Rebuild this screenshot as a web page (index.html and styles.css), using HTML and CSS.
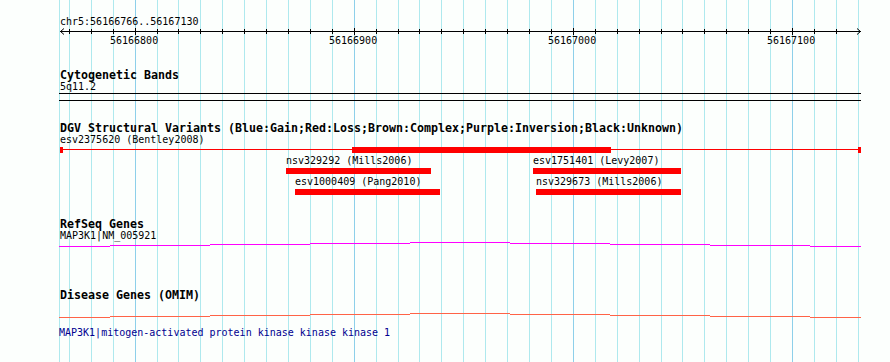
FILE: index.html
```html
<!DOCTYPE html>
<html lang="en">
<head>
<meta charset="utf-8">
<title>chr5:56166766..56167130</title>
<link rel="stylesheet" href="styles.css">
</head>
<body>
<div class="browser">
  <svg class="grid" width="890" height="362" viewBox="0 0 890 362" shape-rendering="crispEdges" aria-hidden="true">
    <g class="minor">
      <rect x="59" y="0" width="1" height="362"/>
      <rect x="69" y="0" width="1" height="362"/>
      <rect x="91" y="0" width="1" height="362"/>
      <rect x="113" y="0" width="1" height="362"/>
      <rect x="157" y="0" width="1" height="362"/>
      <rect x="178" y="0" width="1" height="362"/>
      <rect x="200" y="0" width="1" height="362"/>
      <rect x="222" y="0" width="1" height="362"/>
      <rect x="244" y="0" width="1" height="362"/>
      <rect x="266" y="0" width="1" height="362"/>
      <rect x="288" y="0" width="1" height="362"/>
      <rect x="310" y="0" width="1" height="362"/>
      <rect x="332" y="0" width="1" height="362"/>
      <rect x="376" y="0" width="1" height="362"/>
      <rect x="398" y="0" width="1" height="362"/>
      <rect x="419" y="0" width="1" height="362"/>
      <rect x="441" y="0" width="1" height="362"/>
      <rect x="463" y="0" width="1" height="362"/>
      <rect x="485" y="0" width="1" height="362"/>
      <rect x="507" y="0" width="1" height="362"/>
      <rect x="529" y="0" width="1" height="362"/>
      <rect x="551" y="0" width="1" height="362"/>
      <rect x="595" y="0" width="1" height="362"/>
      <rect x="617" y="0" width="1" height="362"/>
      <rect x="639" y="0" width="1" height="362"/>
      <rect x="661" y="0" width="1" height="362"/>
      <rect x="682" y="0" width="1" height="362"/>
      <rect x="704" y="0" width="1" height="362"/>
      <rect x="726" y="0" width="1" height="362"/>
      <rect x="748" y="0" width="1" height="362"/>
      <rect x="770" y="0" width="1" height="362"/>
      <rect x="814" y="0" width="1" height="362"/>
      <rect x="836" y="0" width="1" height="362"/>
      <rect x="858" y="0" width="1" height="362"/>
    </g>
    <g class="major">
      <rect x="135" y="0" width="1" height="362"/>
      <rect x="354" y="0" width="1" height="362"/>
      <rect x="573" y="0" width="1" height="362"/>
      <rect x="792" y="0" width="1" height="362"/>
    </g>
  </svg>

  <div class="content">
    <div class="ruler">
      <div class="ruler-title">chr5:56166766..56167130</div>
      <div class="lane">
        <svg class="scale" width="802" height="8" viewBox="59 27 802 8" aria-hidden="true">
          <g shape-rendering="crispEdges">
            <rect x="60" y="31" width="801" height="1"/>
            <rect x="69" y="29" width="1" height="5"/>
            <rect x="91" y="29" width="1" height="5"/>
            <rect x="113" y="29" width="1" height="5"/>
            <rect x="135" y="28" width="1" height="7"/>
            <rect x="157" y="29" width="1" height="5"/>
            <rect x="178" y="29" width="1" height="5"/>
            <rect x="200" y="29" width="1" height="5"/>
            <rect x="222" y="29" width="1" height="5"/>
            <rect x="244" y="29" width="1" height="5"/>
            <rect x="266" y="29" width="1" height="5"/>
            <rect x="288" y="29" width="1" height="5"/>
            <rect x="310" y="29" width="1" height="5"/>
            <rect x="332" y="29" width="1" height="5"/>
            <rect x="354" y="28" width="1" height="7"/>
            <rect x="376" y="29" width="1" height="5"/>
            <rect x="398" y="29" width="1" height="5"/>
            <rect x="419" y="29" width="1" height="5"/>
            <rect x="441" y="29" width="1" height="5"/>
            <rect x="463" y="29" width="1" height="5"/>
            <rect x="485" y="29" width="1" height="5"/>
            <rect x="507" y="29" width="1" height="5"/>
            <rect x="529" y="29" width="1" height="5"/>
            <rect x="551" y="29" width="1" height="5"/>
            <rect x="573" y="28" width="1" height="7"/>
            <rect x="595" y="29" width="1" height="5"/>
            <rect x="617" y="29" width="1" height="5"/>
            <rect x="639" y="29" width="1" height="5"/>
            <rect x="661" y="29" width="1" height="5"/>
            <rect x="682" y="29" width="1" height="5"/>
            <rect x="704" y="29" width="1" height="5"/>
            <rect x="726" y="29" width="1" height="5"/>
            <rect x="748" y="29" width="1" height="5"/>
            <rect x="770" y="29" width="1" height="5"/>
            <rect x="792" y="28" width="1" height="7"/>
            <rect x="814" y="29" width="1" height="5"/>
            <rect x="836" y="29" width="1" height="5"/>
          </g>
          <polyline class="arrow" points="64,28.5 60.5,31.5 64,34.5"/>
          <polyline class="arrow" points="857,28.5 860.5,31.5 857,34.5"/>
        </svg>
        <div class="scale-labels">
          <span class="tick-label" style="left:51px">56166800</span>
          <span class="tick-label" style="left:270px">56166900</span>
          <span class="tick-label" style="left:489px">56167000</span>
          <span class="tick-label" style="left:708px">56167100</span>
        </div>
      </div>
    </div>

    <section class="track track-cyto">
      <h2 class="track-title">Cytogenetic Bands</h2>
      <div class="lane">
        <div class="feature-label edge-label">5q11.2</div>
        <div class="ideogram"></div>
      </div>
    </section>

    <section class="track track-dgv">
      <h2 class="track-title">DGV Structural Variants (Blue:Gain;Red:Loss;Brown:Complex;Purple:Inversion;Black:Unknown)</h2>
      <div class="lane">
        <div class="span-row">
          <div class="feature-label edge-label">esv2375620 (Bentley2008)</div>
          <div class="span-glyph">
            <div class="span-line"></div>
            <div class="span-cap cap-left"></div>
            <div class="span-cap cap-right"></div>
            <div class="loss-bar span-core" style="left:293px;width:259px"></div>
          </div>
        </div>
        <div class="variant-row">
          <div class="variant" style="left:227px;width:145px">
            <div class="feature-label">nsv329292 (Mills2006)</div>
            <div class="loss-bar"></div>
          </div>
          <div class="variant" style="left:474px;width:148px">
            <div class="feature-label">esv1751401 (Levy2007)</div>
            <div class="loss-bar"></div>
          </div>
        </div>
        <div class="variant-row">
          <div class="variant" style="left:236px;width:145px">
            <div class="feature-label">esv1000409 (Pang2010)</div>
            <div class="loss-bar"></div>
          </div>
          <div class="variant" style="left:477px;width:145px">
            <div class="feature-label">nsv329673 (Mills2006)</div>
            <div class="loss-bar"></div>
          </div>
        </div>
      </div>
    </section>

    <section class="track track-refseq">
      <h2 class="track-title">RefSeq Genes</h2>
      <div class="lane">
        <div class="feature-label edge-label">MAP3K1|NM_005921</div>
        <svg class="hat hat-refseq" width="802" height="5" viewBox="59 0 802 5" shape-rendering="crispEdges" aria-hidden="true">
          <rect x="59" y="4" width="51" height="1"/>
          <rect x="110" y="3" width="100" height="1"/>
          <rect x="210" y="2" width="100" height="1"/>
          <rect x="310" y="1" width="100" height="1"/>
          <rect x="410" y="0" width="100" height="1"/>
          <rect x="510" y="1" width="100" height="1"/>
          <rect x="610" y="2" width="100" height="1"/>
          <rect x="710" y="3" width="100" height="1"/>
          <rect x="810" y="4" width="51" height="1"/>
        </svg>
      </div>
    </section>

    <section class="track track-omim">
      <h2 class="track-title">Disease Genes (OMIM)</h2>
      <div class="lane">
        <div class="feature-label edge-label blank-label"></div>
        <svg class="hat hat-omim" width="802" height="5" viewBox="59 0 802 5" shape-rendering="crispEdges" aria-hidden="true">
          <rect x="59" y="4" width="51" height="1"/>
          <rect x="110" y="3" width="100" height="1"/>
          <rect x="210" y="2" width="100" height="1"/>
          <rect x="310" y="1" width="100" height="1"/>
          <rect x="410" y="0" width="100" height="1"/>
          <rect x="510" y="1" width="100" height="1"/>
          <rect x="610" y="2" width="100" height="1"/>
          <rect x="710" y="3" width="100" height="1"/>
          <rect x="810" y="4" width="51" height="1"/>
        </svg>
        <div class="feature-desc">MAP3K1|mitogen-activated protein kinase kinase kinase 1</div>
      </div>
    </section>
  </div>
</div>
</body>
</html>
```

FILE: styles.css
```css
html,
body {
  margin: 0;
  padding: 0;
  background: #fcfffd;
}

.browser {
  position: relative;
  width: 890px;
  height: 362px;
  overflow: hidden;
  background: #fcfffd;
  color: #000;
  font-family: "DejaVu Sans Mono", "Liberation Mono", monospace;
}

.grid {
  position: absolute;
  left: 0;
  top: 0;
  display: block;
}

.grid .minor {
  fill: #aee9ee;
}

.grid .major {
  fill: #8dd0ea;
}

.content {
  position: relative;
  padding: 15px 0 0 60px;
}

/* ruler */
.ruler-title {
  font-size: 10px;
  line-height: 13px;
  white-space: nowrap;
}

.lane {
  position: relative;
  margin-left: -1px;
  width: 802px;
}

.scale {
  display: block;
  margin-top: -1px;
  fill: #000;
}

.scale .arrow {
  fill: none;
  stroke: #000;
  stroke-width: 1;
}

.scale-labels {
  position: relative;
  height: 14px;
  margin-top: -1px;
}

.tick-label {
  position: absolute;
  top: 0;
  font-size: 10px;
  line-height: 13px;
  white-space: nowrap;
}

/* tracks */
.track {
  margin-top: 20px;
}

.track-refseq {
  margin-top: 21px;
}

.track-omim {
  margin-top: 41px;
}

.track-title {
  margin: 0;
  font-size: 11.63px;
  font-weight: bold;
  line-height: 14px;
  white-space: nowrap;
}

.feature-label {
  font-size: 10px;
  line-height: 13px;
  height: 13px;
  white-space: nowrap;
}

.edge-label {
  margin-top: -2px;
  padding-left: 1px;
}

/* cytogenetic ideogram */
.ideogram {
  height: 6px;
  border-top: 1px solid #000;
  border-bottom: 1px solid #000;
}

/* DGV variants */
.span-row {
  padding-bottom: 1px;
}

.span-glyph {
  position: relative;
  height: 6px;
  margin-top: 1px;
}

.span-line {
  position: absolute;
  left: 1px;
  right: 0;
  top: 2px;
  height: 1px;
  background: #ff0000;
}

.span-cap {
  position: absolute;
  top: 0;
  width: 3px;
  height: 6px;
  background: #ff0000;
}

.cap-left {
  left: 1px;
}

.cap-right {
  left: 799px;
}

.span-core {
  position: absolute;
  top: 0;
}

.loss-bar {
  height: 6px;
  background: #ff0000;
}

.variant-row {
  position: relative;
  height: 21px;
}

.variant {
  position: absolute;
  top: 0;
}

.variant .feature-label {
  height: 13px;
}

.variant .loss-bar {
  margin-top: 1px;
}

/* gene hats */
.hat {
  display: block;
}

.hat-refseq {
  fill: #ff00ff;
}

.hat-omim {
  fill: #ff6347;
}

.feature-desc {
  margin-top: 8px;
  font-size: 10px;
  line-height: 13px;
  color: #000090;
  white-space: nowrap;
}
```
